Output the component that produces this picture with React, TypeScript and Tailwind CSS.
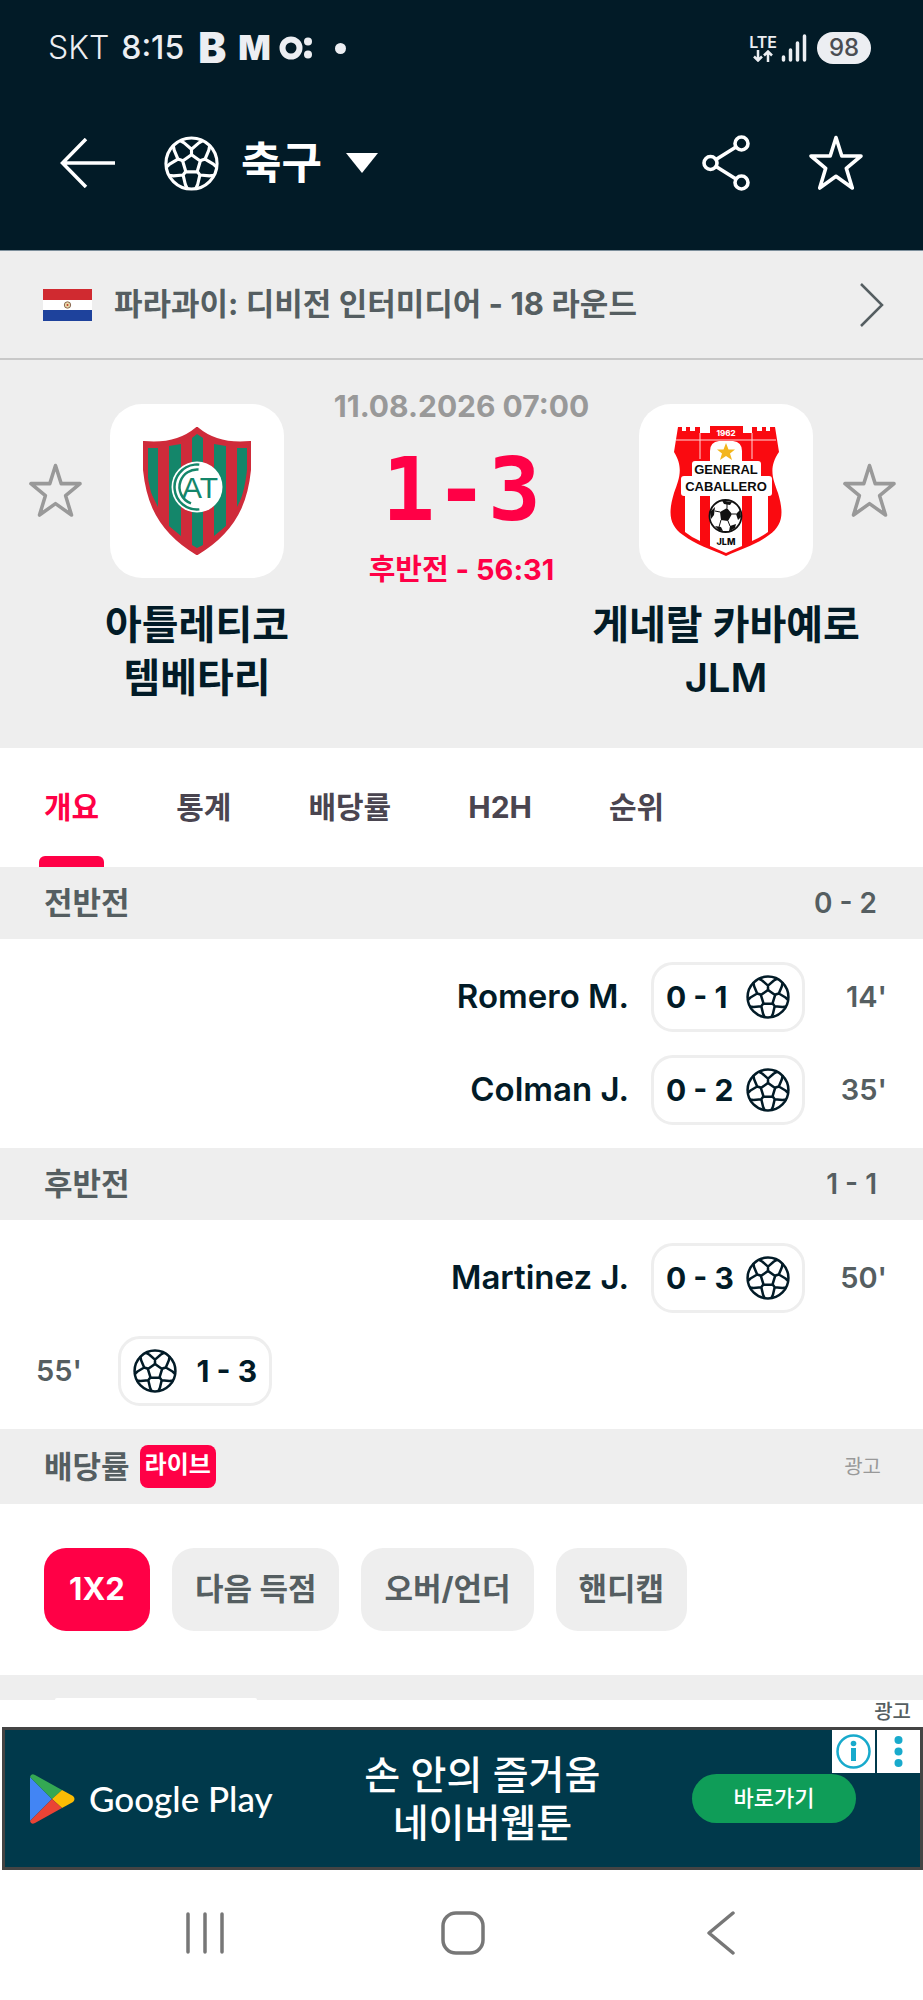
import { useState } from 'react'
import clsx from 'clsx'

type IconProps = { className?: string }

const TABS = ['개요', '통계', '배당률', 'H2H', '순위']
const MARKETS = ['1X2', '다음 득점', '오버/언더', '핸디캡']

const HALVES = [
  {
    name: '전반전',
    score: '0 - 2',
    goals: [
      { side: 'away', player: 'Romero M.', score: '0 - 1', minute: "14'" },
      { side: 'away', player: 'Colman J.', score: '0 - 2', minute: "35'" },
    ],
  },
  {
    name: '후반전',
    score: '1 - 1',
    goals: [
      { side: 'away', player: 'Martinez J.', score: '0 - 3', minute: "50'" },
      { side: 'home', player: '', score: '1 - 3', minute: "55'" },
    ],
  },
]

function BallIcon({ className }: IconProps) {
  return (
    <svg className={className} viewBox="0 0 56 56" fill="none" stroke="currentColor" strokeWidth="3.2" strokeLinejoin="round">
      <circle cx="28" cy="28" r="26" />
      <path d="M28 19 37 25.5 33.7 36.5H22.3L19 25.5Z" />
      {[0, 72, 144, 216, 288].map((angle) => (
        <path key={angle} transform={`rotate(${angle} 28 28)`} d="M28 19V13.5M16 4.5 20.5 7 28 13.5 35.5 7 40 4.5" />
      ))}
    </svg>
  )
}

function StarIcon({ className }: IconProps) {
  return (
    <svg className={className} viewBox="0 0 56 56" fill="none" stroke="currentColor" strokeWidth="3.6" strokeLinejoin="round">
      <path d="M28 2.5 33.8 21H53L38.3 33.3 44.3 53 28 41.3 11.7 53 17.7 33.3 3 21H22.2Z" />
    </svg>
  )
}

function HomeCrest() {
  return (
    <svg className="w-[108px] h-[128px]" viewBox="0 0 108 128">
      <clipPath id="shield">
        <path d="M1 16C22 18 41 13 54 2 67 13 86 18 107 16 108 67 96 101 54 126 12 101 0 67 1 16Z" />
      </clipPath>
      <g clipPath="url(#shield)">
        <rect width="108" height="128" fill="#cf2b3a" />
        <path fill="#14866a" d="M5 21H15V80L5 60ZM26 19 38 17V109L26 99ZM49 11 54 7 60 11V118L54 121 49 118ZM71 17 83 19V99L71 109ZM94 21H104V60L94 80Z" />
      </g>
      <path d="M1 16C22 18 41 13 54 2 67 13 86 18 107 16 108 67 96 101 54 126 12 101 0 67 1 16Z" fill="none" stroke="#cf2b3a" strokeWidth="4" />
      <circle cx="54" cy="60" r="25.5" fill="#fff" />
      <g fill="none" stroke="#14866a" strokeWidth="2.5">
        <circle cx="54" cy="60" r="22.5" strokeDasharray="75 200" transform="rotate(84 54 60)" />
        <circle cx="54" cy="60" r="17.5" strokeDasharray="50 200" transform="rotate(110 54 60)" />
      </g>
      <text x="57" y="71" textAnchor="middle" fontSize="30" fill="#14866a" className="font-['Liberation_Sans',sans-serif]">
        AT
      </text>
    </svg>
  )
}

function AwayCrest() {
  return (
    <svg className="w-[112px] h-[132px]" viewBox="0 0 112 132">
      <path fill="#fa0a10" d="M8 2H12V6H16V2H20V6H25V2H30V8H40V1H73V8H82V2H87V6H92V2H96V6H100V2H105L109 27C98 43 103 54 108 68 114 88 113 100 99 110 86 120 71 124 56 131 41 124 26 120 13 110-1 100-2 88 4 68 9 54 14 43 4 27Z" />
      <path d="M6 15H106M30 8V34M82 8V34" stroke="#ffd8d8" strokeWidth="1" />
      <path fill="#fff" d="M40 36V26Q40 17 49 16H63Q72 17 72 26V36ZM15 60H30V116Q21 112 15 107ZM40 60H72V121L56 128 40 121ZM82 60H98V107Q91 112 82 116Z" />
      <rect x="22" y="36" width="69" height="20" rx="3" fill="#fff" />
      <rect x="11" y="51" width="91" height="20" rx="3" fill="#fff" />
      <path fill="#f3b51c" d="M56 18 58.5 24.5H65L60 28.5 62 35 56 31 50 35 52 28.5 47 24.5H53.5Z" />
      <circle cx="55.5" cy="91" r="16" fill="#fff" stroke="#111" strokeWidth="1.8" />
      <path fill="#111" d="M50 87 57 83 62 89 58 96 51 95ZM52 75.5 62 77 60 80 54 79ZM40 87 45 82 44 90 41 94ZM70 85 71 92 68 95 66 89ZM45 101 51 102 53 106 49 105.5ZM60 101 66 99 65 103 59 106.5Z" />
      <path d="M57 83V79M62 89 66 89M58 96 60 101M51 95 49 102M50 87 45 86" stroke="#111" />
      <g textAnchor="middle" fontWeight="700" fill="#0b0b0b" className="font-['Liberation_Sans',sans-serif]">
        <text x="56" y="49" fontSize="13">GENERAL</text>
        <text x="56" y="66" fontSize="13">CABALLERO</text>
      </g>
      <g textAnchor="middle" fontWeight="800" className="font-[Inter,sans-serif]">
        <text x="56" y="11" fontSize="8" fill="#fff">1962</text>
        <text x="56" y="120" fontSize="9" fill="#0b0b0b">JLM</text>
      </g>
    </svg>
  )
}

function StatusBar() {
  return (
    <div className="flex items-center h-[96px] pl-12 pr-[52px] text-[#eceef2]">
      <span className="text-[32px] font-light">SKT</span>
      <span className="ml-3 text-[32px] font-medium">8:15</span>
      <span className="ml-[14px] text-[42px] leading-10 font-black">B</span>
      <span className="ml-3 text-[34px] leading-10 font-black">M</span>
      <svg className="ml-2 w-[34px] h-6" viewBox="0 0 34 24" fill="currentColor">
        <circle cx="12" cy="12" r="8.5" fill="none" stroke="currentColor" strokeWidth="6" />
        <circle cx="29" cy="5.5" r="4" />
        <circle cx="29" cy="18.5" r="4" />
      </svg>
      <span className="ml-[22px] size-[11px] rounded-full bg-current" />
      <div className="ml-auto flex flex-col items-center">
        <span className="text-base leading-4 font-semibold">LTE</span>
        <svg className="w-5 h-3" viewBox="0 0 20 12" fill="none" stroke="currentColor" strokeWidth="2.5">
          <path d="M5 0V11M1 6.5 5 10.5 9 6.5M15 12V1M11 5.5 15 1.5 19 5.5" />
        </svg>
      </div>
      <svg className="ml-1 w-[26px] h-[30px]" viewBox="0 0 26 30" stroke="currentColor" strokeWidth="3.5" strokeLinecap="round">
        <path d="M2.5 24V27M9.5 17V27M16.5 10V27M23.5 3V27" />
      </svg>
      <span className="ml-[10px] w-[54px] h-8 rounded-full bg-[#eceef2] text-[#4a4d52] text-2xl leading-8 font-medium text-center">98</span>
    </div>
  )
}

function Team({ name, crest }: { name: string[]; crest: React.ReactNode }) {
  return (
    <div className="flex w-[280px] flex-col items-center">
      <div className="flex size-[174px] items-center justify-center rounded-[32px] bg-white">{crest}</div>
      <h2 className="mt-5 text-center text-[40px] leading-[53px] font-semibold text-[#021b27]">
        {name[0]}
        <br />
        {name[1]}
      </h2>
    </div>
  )
}

export default function App() {
  const [tab, setTab] = useState(TABS[0])
  const [market, setMarket] = useState(MARKETS[0])

  return (
    <div className="min-h-screen bg-white font-[Inter,'Noto_Sans_CJK_KR',sans-serif]">
      <header className="h-[250px] bg-[#021b27] text-white">
        <StatusBar />
        <div className="flex items-center h-[134px] pl-[60px] pr-[59px]">
          <button aria-label="뒤로">
            <svg className="w-[55px] h-[50px]" viewBox="0 0 55 50" fill="none" stroke="currentColor" strokeWidth="3.5">
              <path d="M55 25H3M26 1 2.5 25 26 49" />
            </svg>
          </button>
          <button className="ml-[49px] flex items-center">
            <BallIcon className="size-[55px]" />
            <span className="ml-[22px] text-[44px] leading-[56px] font-bold">축구</span>
            <svg className="ml-6 w-8 h-5" viewBox="0 0 32 20" fill="currentColor">
              <path d="M0 0H32L16 20Z" />
            </svg>
          </button>
          <button aria-label="공유" className="ml-auto">
            <svg className="w-12 h-[56px]" viewBox="0 0 48 56" fill="none" stroke="currentColor" strokeWidth="3.6">
              <circle cx="8.5" cy="28" r="6.5" />
              <circle cx="39.5" cy="8.5" r="6.5" />
              <circle cx="39.5" cy="47.5" r="6.5" />
              <path d="M14 24.5 34 12M14 31.5 34 44" />
            </svg>
          </button>
          <button aria-label="즐겨찾기" className="ml-[58px]">
            <StarIcon className="size-[56px]" />
          </button>
        </div>
      </header>

      <a href="#league" className="flex h-[110px] items-center border-t border-b-2 border-t-[#7d8f9c] border-b-[#c8c8c8] bg-[#eee] pl-[43px] pr-[39px] text-[#555e61]">
        <svg className="w-[49px] h-8" viewBox="0 0 49 32">
          <rect width="49" height="32" fill="#fff" />
          <rect width="49" height="11" fill="#d02a30" />
          <rect y="21" width="49" height="11" fill="#1e429c" />
          <circle cx="24.5" cy="16" r="3.2" fill="#e8d9a8" stroke="#8a6a55" />
          <circle cx="24.5" cy="16" r="1" fill="#c0392b" />
        </svg>
        <span className="ml-[22px] text-[31px] font-bold">파라과이: 디비전 인터미디어 - 18 라운드</span>
        <svg className="ml-auto w-[24px] h-11" viewBox="0 0 24 44" fill="none" stroke="currentColor" strokeWidth="2.5">
          <path d="M1 1 22 22 1 43" />
        </svg>
      </a>

      <section className="relative flex h-[388px] justify-between bg-[#eee] px-[57px] pt-11">
        <button aria-label="홈 팀 즐겨찾기" className="absolute left-7 top-[103px] text-[#999]">
          <StarIcon className="size-[55px]" />
        </button>
        <Team name={['아틀레티코', '템베타리']} crest={<HomeCrest />} />
        <div className="absolute inset-x-0 top-[26px] text-center">
          <p className="text-[30px] leading-10 font-bold text-[#999]">11.08.2026 07:00</p>
          <p className="mt-3 text-[88px] leading-[104px] font-bold text-[#ff0046] font-['DejaVu_Sans_Mono',monospace]">1-3</p>
          <p className="mt-2 text-[29px] leading-10 font-bold text-[#ff0046]">후반전 - 56:31</p>
        </div>
        <Team name={['게네랄 카바예로', 'JLM']} crest={<AwayCrest />} />
        <button aria-label="원정 팀 즐겨찾기" className="absolute right-[26px] top-[103px] text-[#999]">
          <StarIcon className="size-[55px]" />
        </button>
      </section>

      <nav className="flex h-[119px] gap-[67px] pl-[39px]">
        {TABS.map((label) => (
          <button
            key={label}
            onClick={() => setTab(label)}
            className={clsx(
              'relative px-[5px] text-[30px] font-bold',
              tab === label ? 'text-[#ff0046]' : 'text-[#4a4550]',
            )}
          >
            {label}
            {tab === label && <span className="absolute inset-x-0 bottom-0 h-[11px] rounded-t-md bg-[#ff0046]" />}
          </button>
        ))}
      </nav>

      {HALVES.map((half) => (
        <section key={half.name}>
          <h3 className="flex h-[72px] items-center justify-between bg-[#eee] pl-11 pr-[46px] text-[31px] leading-10 font-bold text-[#555e61]">
            <span>{half.name}</span>
            <span className="text-[28px] font-semibold">{half.score}</span>
          </h3>
          <ul className="flex flex-col gap-[23px] py-[23px]">
            {half.goals.map((goal) => (
              <li
                key={goal.minute}
                className={clsx('flex items-center px-9', goal.side === 'away' && 'flex-row-reverse')}
              >
                <span className={clsx('w-[82px] text-[29px] font-semibold text-[#555e61]', goal.side === 'away' && 'text-right')}>
                  {goal.minute}
                </span>
                <span
                  className={clsx(
                    'flex h-[70px] w-[154px] items-center justify-between rounded-[22px] border-3 border-[#eee] px-3 text-[30px] font-bold text-[#021b27]',
                    goal.side === 'away' && 'flex-row-reverse',
                  )}
                >
                  <BallIcon className="size-11" />
                  {goal.score}
                </span>
                <span className="mx-[22px] text-[33px] font-semibold text-[#021b27]">{goal.player}</span>
              </li>
            ))}
          </ul>
        </section>
      ))}

      <section>
        <h3 className="flex h-[75px] items-center bg-[#eee] pl-11 pr-[42px] text-[31px] leading-10 font-bold text-[#555e61]">
          배당률
          <span className="ml-[10px] h-[43px] rounded-lg bg-[#ff0046] px-[5px] text-[24px] text-white">라이브</span>
          <span className="ml-auto text-xl font-normal text-[#999]">광고</span>
        </h3>
        <div className="flex gap-[22px] px-11 py-11">
          {MARKETS.map((label) => (
            <button
              key={label}
              onClick={() => setMarket(label)}
              className={clsx(
                'h-[83px] min-w-[106px] rounded-[22px] px-[23px] text-[31px] font-bold',
                market === label ? 'bg-[#ff0046] text-white' : 'bg-[#eee] text-[#555e61]',
              )}
            >
              {label}
            </button>
          ))}
        </div>
        <div className="flex h-[25px] items-end overflow-hidden bg-[#eee] pl-[55px]">
          <div className="h-[2px] w-[202px] rounded-t-full bg-white" />
        </div>
      </section>

      <aside>
        <p className="h-[27px] pr-3 text-right text-xl leading-6 font-medium text-[#555e61]">광고</p>
        <div className="relative ml-[2px] flex h-[143px] items-center border-3 border-[#444] bg-[#00394b] pl-[25px] pr-[64px] text-white">
          <svg className="w-[45px] h-[50px]" viewBox="0 0 45 50">
            <path fill="#4285f4" d="M0 3V47L22 25Z" />
            <path fill="#34a853" d="M0 3Q1-1 5 1L32 16 22 25Z" />
            <path fill="#fbbc04" d="M32 16 43 22Q46 25 43 28L32 34 22 25Z" />
            <path fill="#ea4335" d="M0 47Q1 51 5 49L32 34 22 25Z" />
          </svg>
          <span className="ml-[14px] text-[35px] font-medium font-[Lato,sans-serif]">Google Play</span>
          <p className="mx-auto text-center text-[39px] leading-[48px] font-medium">
            손 안의 즐거움
            <br />
            네이버웹툰
          </p>
          <button className="h-[49px] w-[164px] rounded-full bg-[#0f9d58] text-[22px] font-medium">바로가기</button>
          <div className="absolute right-0 top-0 flex gap-[2px]">
            <button aria-label="광고 정보" className="bg-white">
              <svg className="size-[43px]" viewBox="0 0 43 43" fill="none" stroke="#18aacc" strokeWidth="2.5">
                <circle cx="21.5" cy="21.5" r="16" />
                <path d="M21.5 18V31" strokeWidth="5" />
                <circle cx="21.5" cy="13.5" r="2.8" fill="#18aacc" stroke="none" />
              </svg>
            </button>
            <button aria-label="광고 옵션" className="bg-white">
              <svg className="size-[43px]" viewBox="0 0 43 43" fill="#18aacc">
                <circle cx="21.5" cy="10" r="4" />
                <circle cx="21.5" cy="21.5" r="4" />
                <circle cx="21.5" cy="33" r="4" />
              </svg>
            </button>
          </div>
        </div>
      </aside>

      <nav className="flex h-[126px] items-center justify-between pl-[183px] pr-[180px] text-[#777]">
        <button aria-label="최근 앱">
          <svg className="size-11" viewBox="0 0 44 44" stroke="currentColor" strokeWidth="3.5" strokeLinecap="round">
            <path d="M5 3V41M22 3V41M39 3V41" />
          </svg>
        </button>
        <button aria-label="홈">
          <svg className="size-11" viewBox="0 0 44 44" fill="none" stroke="currentColor" strokeWidth="3.5">
            <rect x="2" y="2" width="40" height="40" rx="13" />
          </svg>
        </button>
        <button aria-label="뒤로 가기">
          <svg className="size-11" viewBox="0 0 44 44" fill="none" stroke="currentColor" strokeWidth="3.5" strokeLinecap="round" strokeLinejoin="round">
            <path d="M34 2 10 22 34 42" />
          </svg>
        </button>
      </nav>
    </div>
  )
}
